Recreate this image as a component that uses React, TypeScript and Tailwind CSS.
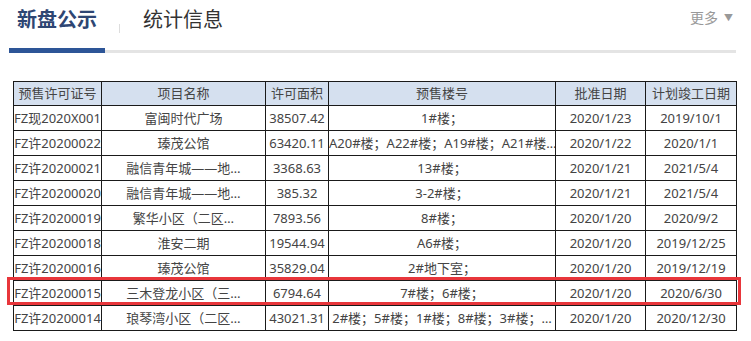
const rows = [
  ["FZ现2020X001", "富闽时代广场", "38507.42", "1#楼；", "2020/1/23", "2019/10/1"],
  ["FZ许20200022", "瑧茂公馆", "63420.11", "A20#楼；A22#楼；A19#楼；A21#楼…", "2020/1/22", "2020/1/1"],
  ["FZ许20200021", "融信青年城——地…", "3368.63", "13#楼；", "2020/1/21", "2021/5/4"],
  ["FZ许20200020", "融信青年城——地…", "385.32", "3-2#楼；", "2020/1/21", "2021/5/4"],
  ["FZ许20200019", "繁华小区（二区…", "7893.56", "8#楼；", "2020/1/20", "2020/9/2"],
  ["FZ许20200018", "淮安二期", "19544.94", "A6#楼；", "2020/1/20", "2019/12/25"],
  ["FZ许20200016", "瑧茂公馆", "35829.04", "2#地下室；", "2020/1/20", "2019/12/19"],
  ["FZ许20200015", "三木登龙小区（三…", "6794.64", "7#楼；6#楼；", "2020/1/20", "2020/6/30"],
  ["FZ许20200014", "琅琴湾小区（二区…", "43021.31", "2#楼；5#楼；1#楼；8#楼；3#楼；…", "2020/1/20", "2020/12/30"],
];

const heads = ["预售许可证号", "项目名称", "许可面积", "预售楼号", "批准日期", "计划竣工日期"];
const widths = ["w-[88px]", "w-[164px]", "w-[63px]", "w-[227px]", "w-[90px]", "w-[91px]"];

export default function App() {
  return (
    <div className="w-[751px] h-[341px] overflow-hidden bg-white font-['Noto_Sans','Noto_Sans_CJK_SC',sans-serif]">
      {/* tabs */}
      <div className="ml-[9px] w-[727px]">
        <div className="flex h-[48px] items-start">
          <div className="w-[96px] pt-[6px] text-center text-[20px] font-bold leading-[28px] text-[#2e4673]">新盘公示</div>
          <div className="ml-[14px] mt-[24px] h-[9px] w-px bg-[#ddd]" />
          <div className="ml-[23px] pt-[6px] text-[20px] leading-[28px] text-[#333]">统计信息</div>
          <div className="ml-auto flex items-center gap-[6px] pt-[7px] pr-[3px] text-[14px] leading-[22px] text-[#999]">
            更多
            <span className="text-[9px]">▼</span>
          </div>
        </div>
        <div className="relative h-[5px]">
          <div className="absolute bottom-0 left-0 h-[3px] w-full bg-[#e4e4e4]" />
          <div className="absolute left-0 top-0 h-[5px] w-[96px] bg-[#2d5597]" />
        </div>
      </div>

      {/* table */}
      <div className="relative ml-[13px] mt-[28px] w-[723px]">
        <table className="w-[723px] table-fixed border-collapse text-[13px] text-[#444]">
          <thead>
            <tr className="h-[24px] bg-[#d5e0ef]">
              {heads.map((h, i) => (
                <th key={h} className={`${widths[i]} border border-[#1a1a1a] p-0 text-center font-normal`}>
                  {h}
                </th>
              ))}
            </tr>
          </thead>
          <tbody>
            {rows.map((r) => (
              <tr key={r[0]} className="h-[25px]">
                {r.map((c, i) => (
                  <td key={i} className="overflow-hidden whitespace-nowrap border border-[#1a1a1a] p-0 text-center leading-[24px]">
                    {c}
                  </td>
                ))}
              </tr>
            ))}
          </tbody>
        </table>
        <div className="pointer-events-none absolute left-[-6px] top-[196px] h-[28px] w-[734px] border-[3px] border-[#e8363b]" />
      </div>
    </div>
  );
}
